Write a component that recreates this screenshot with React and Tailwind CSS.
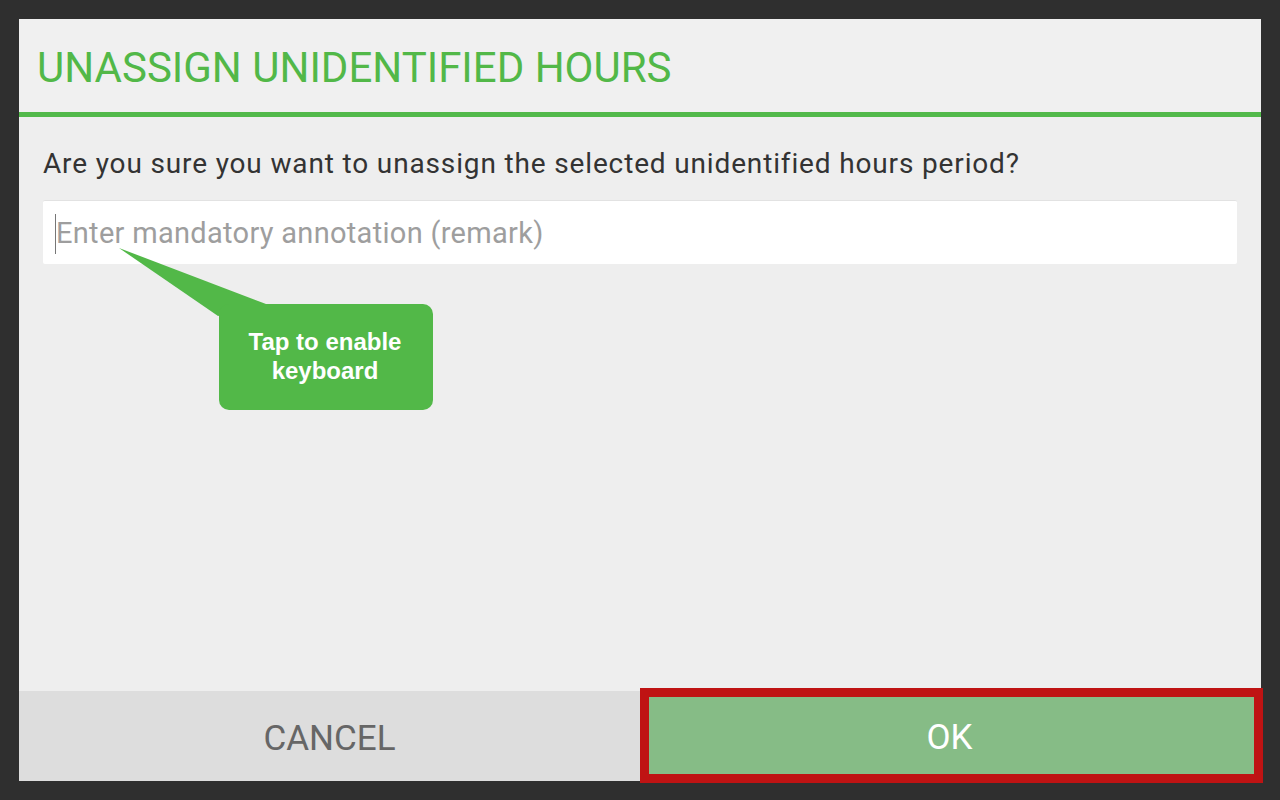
export default function App() {
  return (
    <div className="w-[1280px] h-[800px] bg-[#2f2f2f] p-[19px] font-['Roboto',sans-serif]">
      <div className="relative w-[1242px] h-[762px] bg-[#eeeeee] flex flex-col">
        <div className="h-[93px] bg-[#f0f0f0] flex items-center pl-[18px] pt-[4px]">
          <h1 className="text-[42px] leading-none text-[#52b848]">
            UNASSIGN UNIDENTIFIED HOURS
          </h1>
        </div>
        <div className="h-[5px] bg-[#52b94a]" />

        <div className="flex-1 px-[24px] pt-[30px]">
          <p className="text-[28px] leading-[34px] text-[#333333] tracking-[0.85px]">
            Are you sure you want to unassign the selected unidentified hours period?
          </p>
          <div className="mt-[19px] h-[64px] bg-white rounded-[2px] border-t border-[#e2e2e2] flex items-center pl-[12px] pt-[2px]">
            <div className="w-px h-[40px] bg-[#777777]" />
            <span className="text-[29px] text-[#9e9e9e] leading-none tracking-[0.3px]">
              Enter mandatory annotation (remark)
            </span>
          </div>
        </div>

        <div className="h-[90px] flex">
          <button className="w-[621px] bg-[#dddddd] text-[35px] text-[#666666] flex items-center justify-center pt-[6px]">
            CANCEL
          </button>
          <div className="relative flex-1">
            <button className="absolute left-0 -right-[2px] -top-[3px] -bottom-[2px] border-[9px] border-[#bf1313] bg-[#86bc86] text-[35px] text-white flex items-center justify-center pt-[6px] pr-[4px]">
              OK
            </button>
          </div>
        </div>

        <svg className="absolute left-0 top-0 pointer-events-none" width="1242" height="762">
          <polygon points="100,229 199,297 247,285" fill="#52b848" />
        </svg>
        <div className="absolute left-[200px] top-[285px] w-[214px] h-[106px] bg-[#52b848] rounded-[10px] flex items-center justify-center text-center font-['Liberation_Sans',Arial,sans-serif] font-bold text-[24px] leading-[29px] text-white pb-[2px] pr-[2px]">
          Tap to enable
          <br />
          keyboard
        </div>
      </div>
    </div>
  );
}
